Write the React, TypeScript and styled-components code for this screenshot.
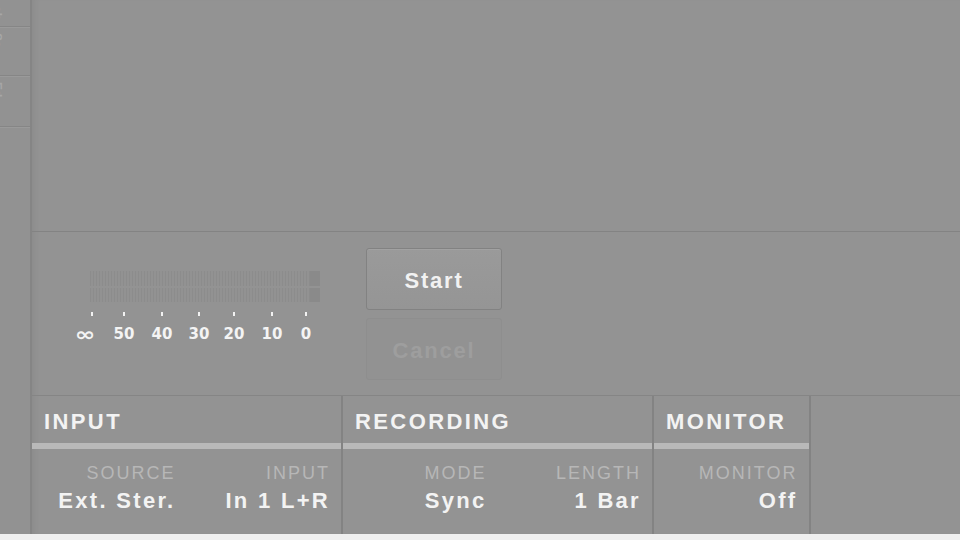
import React from "react";
import styled, { createGlobalStyle } from "styled-components";

const GlobalStyle = createGlobalStyle`
  html, body {
    margin: 0;
    padding: 0;
    background: #939393;
    font-family: "Liberation Sans", Arial, sans-serif;
    overflow: hidden;
  }
`;

const Screen = styled.div`
  width: 960px;
  height: 540px;
  display: flex;
  flex-direction: column;
`;

const Body = styled.div`
  flex: 1;
  display: flex;
  min-height: 0;
`;

const Footer = styled.div`
  height: 6px;
  background: #efefef;
`;

/* narrow tab strip on the left, its labels mostly scrolled out of view */
const SideStrip = styled.div`
  width: 30px;
  background: #929292;
  border-right: 2px solid #858585;
  display: flex;
  flex-direction: column;
`;

const SideTab = styled.div<{ $h: number }>`
  height: ${(p) => p.$h}px;
  border-bottom: 1px solid #868686;
  box-shadow: 0 1px 0 #9a9a9a;
  overflow: hidden;
`;

const SideLabel = styled.span`
  display: block;
  margin-left: -10px;
  margin-top: 6px;
  writing-mode: vertical-rl;
  font-size: 12px;
  font-weight: bold;
  color: #a6a6a6;
`;

const Main = styled.div`
  flex: 1;
  display: flex;
  flex-direction: column;
  box-shadow: inset 6px 0 6px -4px rgba(0, 0, 0, 0.06);
`;

const Viewer = styled.div`
  height: 231px;
  border-bottom: 1px solid #838383;
`;

/* level meter + record buttons */
const RecordArea = styled.div`
  height: 163px;
  border-bottom: 1px solid #858585;
  display: flex;
  padding-left: 58px;
`;

const MeterBlock = styled.div`
  width: 230px;
  padding-top: 39px;
`;

const MeterBar = styled.div<{ $h: number }>`
  height: ${(p) => p.$h}px;
  margin-bottom: 2px;
  display: flex;
`;

const MeterSegments = styled.div`
  flex: 1;
  background: repeating-linear-gradient(
    90deg,
    #8c8c8c 0 1px,
    #929292 1px 3px
  );
`;

const MeterPeak = styled.div`
  width: 10px;
  background: #8a8a8a;
`;

const Scale = styled.div`
  position: relative;
  height: 30px;
  margin-top: 10px;
`;

const Tick = styled.div`
  position: absolute;
  top: 0;
  width: 2px;
  height: 4px;
  background: #f2f2f2;
  transform: translateX(-1px);
`;

const TickLabel = styled.span<{ $wide?: boolean }>`
  position: absolute;
  top: ${(p) => (p.$wide ? 14 : 14)}px;
  transform: translateX(-50%) ${(p) => (p.$wide ? "scaleX(1.3)" : "")};
  font-family: "DejaVu Sans", sans-serif;
  font-size: ${(p) => (p.$wide ? 19 : 15)}px;
  line-height: 17px;
  font-weight: bold;
  color: #f4f4f4;
`;

const ButtonColumn = styled.div`
  margin-left: 46px;
  padding-top: 16px;
  display: flex;
  flex-direction: column;
  gap: 8px;
`;

const PanelButton = styled.div<{ $disabled?: boolean }>`
  width: 134px;
  height: 60px;
  border-radius: 3px;
  display: flex;
  align-items: center;
  justify-content: center;
  font-size: 22px;
  line-height: 26px;
  font-weight: bold;
  letter-spacing: 1.8px;
  color: ${(p) => (p.$disabled ? "#9e9e9e" : "#f2f2f2")};
  border: 1px solid ${(p) => (p.$disabled ? "#8e8e8e" : "#828282")};
  background: ${(p) =>
    p.$disabled ? "#929292" : "linear-gradient(#9a9a9a, #959595)"};
  box-shadow: ${(p) => (p.$disabled ? "none" : "inset 0 1px 0 #a2a2a2")};

  span {
    transform: translateY(2px);
  }
`;

/* parameter sections along the bottom */
const Panel = styled.div`
  flex: 1;
  display: flex;
`;

const Section = styled.div<{ $cols: number }>`
  width: ${(p) => p.$cols * 154.5}px;
  border-right: 2px solid #838383;
  display: flex;
  flex-direction: column;
`;

const SectionHeader = styled.div`
  height: 47px;
  box-sizing: border-box;
  padding: 4px 0 0 12px;
  display: flex;
  align-items: center;
  font-size: 22px;
  font-weight: bold;
  letter-spacing: 2.4px;
  color: #f3f3f3;
`;

const SectionBar = styled.div`
  height: 6px;
  background: #b9b9b9;
`;

const FieldRow = styled.div`
  display: flex;
  padding-top: 13px;
`;

const Field = styled.div`
  flex: 1;
  display: flex;
  flex-direction: column;
  align-items: flex-end;
  padding-right: 11px;
`;

const FieldLabel = styled.span`
  font-size: 18px;
  letter-spacing: 2px;
  color: #b7b7b7;
  line-height: 22px;
`;

const FieldValue = styled.span`
  margin-top: 3px;
  font-size: 22px;
  font-weight: bold;
  letter-spacing: 2.3px;
  color: #f3f3f3;
  line-height: 28px;
`;

const scale = [
  { x: 2, label: "∞", offset: -7 },
  { x: 34, label: "50", offset: 0 },
  { x: 72, label: "40", offset: 0 },
  { x: 109, label: "30", offset: 0 },
  { x: 144, label: "20", offset: 0 },
  { x: 182, label: "10", offset: 0 },
  { x: 216, label: "0", offset: 0 },
];

const sections = [
  {
    title: "INPUT",
    fields: [
      { label: "SOURCE", value: "Ext. Ster." },
      { label: "INPUT", value: "In 1 L+R" },
    ],
  },
  {
    title: "RECORDING",
    fields: [
      { label: "MODE", value: "Sync" },
      { label: "LENGTH", value: "1 Bar" },
    ],
  },
  {
    title: "MONITOR",
    fields: [{ label: "MONITOR", value: "Off" }],
  },
];

export default function App() {
  return (
    <>
      <GlobalStyle />
      <Screen>
        <Body>
          <SideStrip>
            <SideTab $h={26}>
              <SideLabel>ab</SideLabel>
            </SideTab>
            <SideTab $h={48}>
              <SideLabel>Sa</SideLabel>
            </SideTab>
            <SideTab $h={50}>
              <SideLabel>Ed</SideLabel>
            </SideTab>
          </SideStrip>
          <Main>
            <Viewer />
            <RecordArea>
              <MeterBlock>
                <MeterBar $h={15}>
                  <MeterSegments />
                  <MeterPeak />
                </MeterBar>
                <MeterBar $h={14}>
                  <MeterSegments />
                  <MeterPeak />
                </MeterBar>
                <Scale>
                  {scale.map((s) => (
                    <React.Fragment key={s.label}>
                      <Tick style={{ left: s.x }} />
                      <TickLabel
                        style={{ left: s.x + s.offset }}
                        $wide={s.label === "∞"}
                      >
                        {s.label}
                      </TickLabel>
                    </React.Fragment>
                  ))}
                </Scale>
              </MeterBlock>
              <ButtonColumn>
                <PanelButton>
                  <span>Start</span>
                </PanelButton>
                <PanelButton $disabled>
                  <span>Cancel</span>
                </PanelButton>
              </ButtonColumn>
            </RecordArea>
            <Panel>
              {sections.map((sec) => (
                <Section key={sec.title} $cols={sec.fields.length}>
                  <SectionHeader>{sec.title}</SectionHeader>
                  <SectionBar />
                  <FieldRow>
                    {sec.fields.map((f) => (
                      <Field key={f.label}>
                        <FieldLabel>{f.label}</FieldLabel>
                        <FieldValue>{f.value}</FieldValue>
                      </Field>
                    ))}
                  </FieldRow>
                </Section>
              ))}
            </Panel>
          </Main>
        </Body>
        <Footer />
      </Screen>
    </>
  );
}
